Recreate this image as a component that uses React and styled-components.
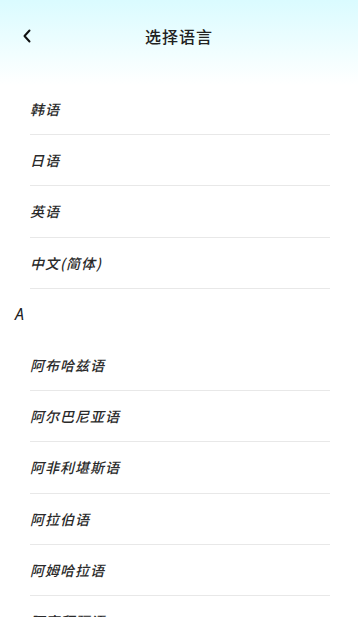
import styled, { createGlobalStyle } from 'styled-components'

const GlobalStyle = createGlobalStyle`
  html, body {
    margin: 0;
    padding: 0;
    background: #ffffff;
  }
  body {
    font-family: "Noto Sans", "Noto Sans CJK SC", sans-serif;
  }
`

const Page = styled.div`
  width: 358px;
  height: 617px;
  overflow: hidden;
  background: linear-gradient(180deg, #dafbff 0px, #f2feff 55px, #ffffff 85px);
`

const Header = styled.div`
  height: 72px;
  display: flex;
  align-items: center;
  justify-content: center;
  position: relative;
`

const Back = styled.div`
  position: absolute;
  left: 17px;
  top: 26px;
  width: 20px;
  height: 20px;
  display: flex;
  align-items: center;
  justify-content: center;
`

const Title = styled.h1`
  margin: 0;
  font-size: 16px;
  font-weight: 500;
  color: #222;
  letter-spacing: 1px;
  font-family: "Noto Sans CJK SC", sans-serif;
`

const List = styled.div`
  padding-top: 12px;
  display: flex;
  flex-direction: column;
`

const Row = styled.div`
  height: 51.2px;
  flex-shrink: 0;
  margin: 0 28px 0 30px;
  box-sizing: border-box;
  border-bottom: 1px solid #e8e8e8;
  display: flex;
  align-items: center;
  font-size: 14px;
  font-weight: 500;
  color: #2a2a2a;
  font-style: italic;
  letter-spacing: 1px;
  font-family: "Noto Sans CJK SC", sans-serif;
`

const Section = styled.div`
  height: 51.2px;
  flex-shrink: 0;
  padding-left: 15px;
  display: flex;
  align-items: center;
  font-size: 16px;
  font-style: italic;
  color: #222;
  font-family: "Noto Sans", sans-serif;
`

const top = ['韩语', '日语', '英语', '中文(简体)']
const a = ['阿布哈兹语', '阿尔巴尼亚语', '阿非利堪斯语', '阿拉伯语', '阿姆哈拉语', '阿塞拜疆语']

const App = () => {
  return (
    <>
      <GlobalStyle />
      <Page>
        <Header>
          <Back>
            <svg width="10" height="14" viewBox="0 0 10 14">
              <path d="M7.5 1.5 L2.5 7 L7.5 12.5" fill="none" stroke="#111" strokeWidth="2" strokeLinecap="round" strokeLinejoin="round" />
            </svg>
          </Back>
          <Title>选择语言</Title>
        </Header>
        <List>
          {top.map(l => <Row key={l}>{l}</Row>)}
          <Section>A</Section>
          {a.map(l => <Row key={l}>{l}</Row>)}
        </List>
      </Page>
    </>
  )
}

export default App
